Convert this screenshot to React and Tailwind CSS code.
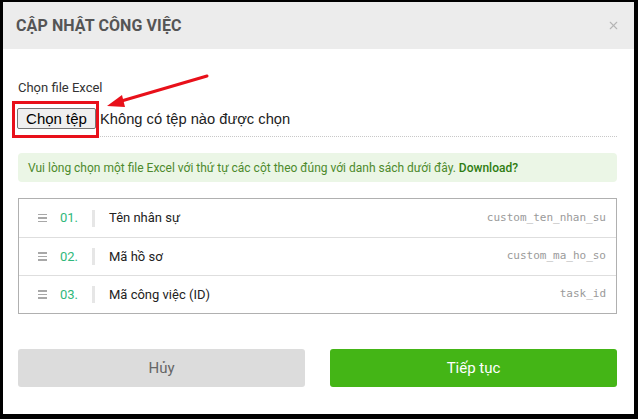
import React from 'react';
import { X } from 'lucide-react';

const columns = [
  { no: '01.', label: 'Tên nhân sự', key: 'custom_ten_nhan_su' },
  { no: '02.', label: 'Mã hồ sơ', key: 'custom_ma_ho_so' },
  { no: '03.', label: 'Mã công việc (ID)', key: 'task_id' },
];

export default function App() {
  return (
    <div className="w-[638px] h-[419px] bg-black pt-[2px] pl-[3px] pr-[4px] pb-[5px] font-['Roboto',sans-serif]">
      <div className="relative h-full bg-white flex flex-col">
        {/* header */}
        <div className="h-[47px] bg-[#ececec] flex items-center justify-between pl-[13px] pr-[14px]">
          <h2 className="text-[16px] font-bold text-[#555] tracking-[0.1px]">CẬP NHẬT CÔNG VIỆC</h2>
          <X className="w-[13px] h-[13px] text-[#b5b5b5]" strokeWidth={2} />
        </div>

        <div className="pl-[15px] pr-[17px]">
          <div className="mt-[31px] text-[13px] text-[#333] leading-[16px]">Chọn file Excel</div>

          {/* file picker */}
          <div className="mt-[12px] h-[29px] flex items-start border-b border-dotted border-[#c8c8c8] font-['Liberation_Sans',Arial,sans-serif]">
            <button className="ml-[-1px] w-[79px] h-[21px] bg-[#efefef] border border-[#767676] rounded-[2px] text-[15px] text-black leading-none">
              Chọn tệp
            </button>
            <span className="ml-[4px] text-[14.7px] text-[#222] leading-[23px]">Không có tệp nào được chọn</span>
          </div>

          {/* info */}
          <div className="mt-[16px] h-[29px] rounded-[4px] bg-[#ebf6e6] px-[10px] flex items-center text-[12px] text-[#4d8a2c]">
            <span>
              Vui lòng chọn một file Excel với thứ tự các cột theo đúng với danh sách dưới đây.{' '}
              <span className="font-medium text-[#2f7d12]">Download?</span>
            </span>
          </div>

          {/* column list */}
          <div className="mt-[16px] border border-[#b0b0b0]">
            {columns.map((c, i) => (
              <div
                key={c.key}
                className={`h-[38px] flex items-center ${i > 0 ? 'border-t border-[#dedede]' : ''}`}
              >
                <span className="ml-[19px] w-[9px] flex flex-col gap-[2px]">
                  <span className="h-[1.5px] bg-[#a8a8a8]" />
                  <span className="h-[1.5px] bg-[#a8a8a8]" />
                  <span className="h-[1.5px] bg-[#a8a8a8]" />
                </span>
                <span className="ml-[13px] w-[32px] text-[13px] text-[#2fb87b]">{c.no}</span>
                <span className="w-[3px] h-[17px] bg-[#e6e6e6]" />
                <span className="ml-[14px] text-[13px] text-[#222]">{c.label}</span>
                <span className="ml-auto mr-[10px] text-[11px] text-[#9a9a9a] font-['DejaVu_Sans_Mono',monospace]">
                  {c.key}
                </span>
              </div>
            ))}
          </div>

          {/* actions */}
          <div className="mt-[35px] flex gap-[25px]">
            <button className="flex-1 h-[38px] rounded-[3px] bg-[#dcdcdc] text-[15px] text-[#666]">Hủy</button>
            <button className="flex-1 h-[38px] rounded-[3px] bg-[#44b516] text-[15px] text-white">Tiếp tục</button>
          </div>
        </div>

        {/* annotation overlay */}
        <div className="absolute left-[9px] top-[99px] w-[87px] h-[37px] border-[3px] border-[#e8101a]" />
        <svg className="absolute left-0 top-0" width="634" height="412" viewBox="0 0 634 412">
          <line x1="204" y1="74" x2="115" y2="100" stroke="#e8101a" strokeWidth="3" strokeLinecap="round" />
          <polygon points="104,104 119,93 122,105" fill="#e8101a" />
        </svg>
      </div>
    </div>
  );
}
